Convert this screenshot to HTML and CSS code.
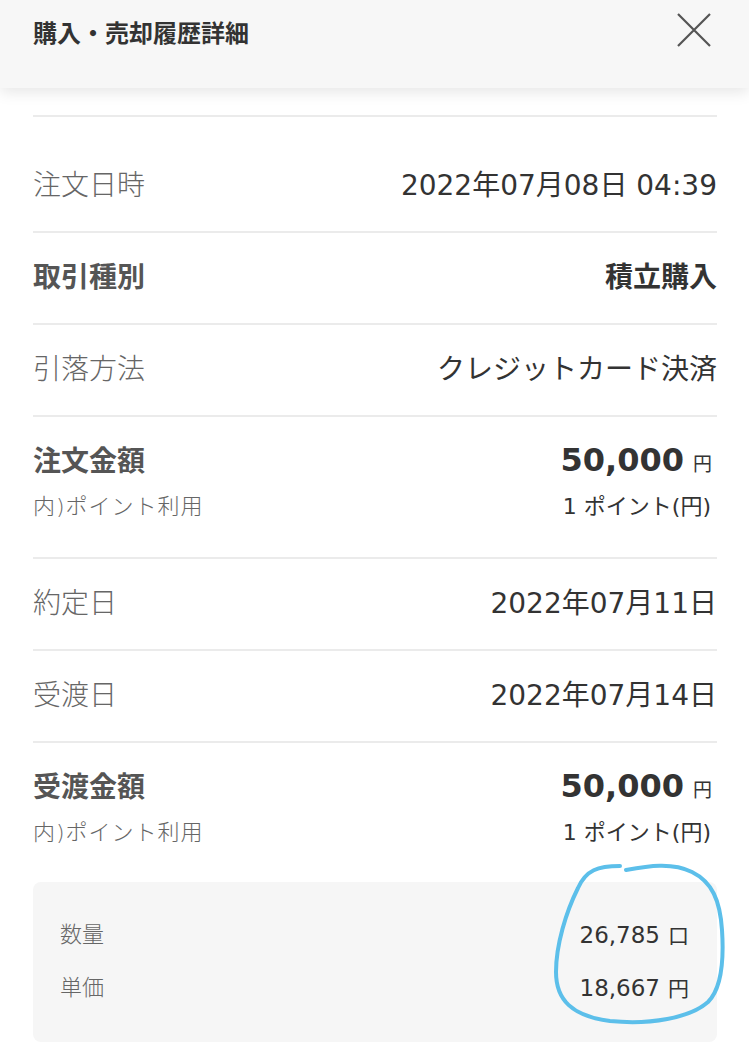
FILE: index.html
```html
<!DOCTYPE html>
<html lang="ja">
<head>
  <meta charset="UTF-8" />
  <meta name="viewport" content="width=device-width, initial-scale=1" />
  <title>購入・売却履歴詳細</title>
  <link rel="stylesheet" href="styles.css">
</head>
<body>
  <header class="header">
    <h1 class="header-title">購入・売却履歴詳細</h1>
    <button class="close-btn" aria-label="閉じる">
      <svg width="34" height="34" viewBox="0 0 34 34">
        <path d="M1 1 L33 33 M33 1 L1 33" stroke="#555" stroke-width="2.2" fill="none" />
      </svg>
    </button>
  </header>

  <main class="detail">
    <div class="row first">
      <span class="label">注文日時</span>
      <span class="value">2022年07月08日 04:39</span>
    </div>
    <div class="row">
      <span class="label bold">取引種別</span>
      <span class="value bold">積立購入</span>
    </div>
    <div class="row">
      <span class="label">引落方法</span>
      <span class="value">クレジットカード決済</span>
    </div>
    <div class="row amount">
      <div class="line">
        <span class="label bold">注文金額</span>
        <span class="value big">50,000<small>円</small></span>
      </div>
      <div class="line sub">
        <span class="label">内)ポイント利用</span>
        <span class="value">1 ポイント(円)</span>
      </div>
    </div>
    <div class="row">
      <span class="label">約定日</span>
      <span class="value">2022年07月11日</span>
    </div>
    <div class="row">
      <span class="label">受渡日</span>
      <span class="value">2022年07月14日</span>
    </div>
    <div class="row amount last">
      <div class="line">
        <span class="label bold">受渡金額</span>
        <span class="value big">50,000<small>円</small></span>
      </div>
      <div class="line sub">
        <span class="label">内)ポイント利用</span>
        <span class="value">1 ポイント(円)</span>
      </div>
    </div>

    <div class="summary">
      <div class="summary-row">
        <span>数量</span>
        <span class="num">26,785<small>口</small></span>
      </div>
      <div class="summary-row">
        <span>単価</span>
        <span class="num">18,667<small>円</small></span>
      </div>
    </div>
  </main>

  <!-- hand-drawn marker over the numbers -->
  <svg class="marker" width="749" height="1050" viewBox="0 0 749 1050">
    <path d="M620 866 C598 866 586 870 578 888 C566 912 556 945 556 972 C556 1000 572 1016 610 1021 C650 1025 690 1018 708 1002 C722 988 724 960 722 930 C720 900 712 882 692 872 C672 862 648 866 626 870"
      stroke="#5cbfea" stroke-width="4" fill="none" stroke-linecap="round" />
  </svg>
</body>
</html>
```

FILE: styles.css
```css
body {
  margin: 0;
  background: #fff;
  font-family: "DejaVu Sans", "Noto Sans CJK JP", sans-serif;
  color: #333;
}

/* Header */
.header {
  height: 88px;
  background: #f7f7f7;
  display: flex;
  justify-content: space-between;
  align-items: flex-start;
  padding: 0 38px 0 33px;
  box-shadow: 0 4px 14px rgba(0,0,0,0.1);
  position: relative;
}

.header-title {
  margin: 14px 0 0;
  font-family: "Noto Sans CJK JP", sans-serif;
  font-size: 24px;
  font-weight: 700;
  line-height: 36px;
  color: #333;
}

.close-btn {
  margin-top: 13px;
  padding: 0;
  border: none;
  background: none;
}

/* Detail list */
.detail {
  margin-top: 27px;
  padding: 0 32px 0 33px;
}

.detail::before {
  content: "";
  display: block;
  border-top: 2px solid #ebebeb;
}

.row {
  display: flex;
  justify-content: space-between;
  align-items: center;
  height: 40px;
  padding: 25px 0;
  border-bottom: 2px solid #ebebeb;
  font-size: 28px;
  line-height: 40px;
}

.row.first {
  padding-top: 49px;
}

.row.amount {
  display: block;
  height: 80px;
  padding-bottom: 35px;
}

.row.last {
  border-bottom: none;
  padding-bottom: 34px;
}

.line {
  display: flex;
  justify-content: space-between;
  align-items: center;
  height: 40px;
}

.line.sub {
  margin-top: 10px;
  height: 30px;
  font-size: 22px;
  line-height: 30px;
}

.line.sub .label {
  letter-spacing: 1px;
}

.line.sub .value {
  padding-right: 6px;
}

.label {
  color: #666;
  font-weight: 300;
}

.value {
  color: #333;
  font-weight: 400;
}

.bold,
.label.bold,
.value.bold {
  font-weight: 700;
}

.label.bold {
  color: #555;
}

.value.big {
  font-size: 32px;
  font-weight: 700;
  padding-right: 5px;
}

.value.big small {
  font-size: 19px;
  font-weight: 400;
  margin-left: 9px;
}

/* Summary box */
.summary {
  background: #f6f6f6;
  border-radius: 8px;
  padding: 38px 28px 39px 27px;
  display: flex;
  flex-direction: column;
  gap: 23px;
}

.summary-row {
  display: flex;
  justify-content: space-between;
  align-items: center;
  height: 30px;
  font-size: 22px;
  line-height: 30px;
  color: #666;
  font-weight: 300;
}

.summary-row .num {
  color: #333;
  font-size: 23px;
  font-weight: 400;
}

.summary-row .num small {
  font-size: 21px;
  margin-left: 8px;
}

.marker {
  position: absolute;
  top: 0;
  left: 0;
  pointer-events: none;
}
```
